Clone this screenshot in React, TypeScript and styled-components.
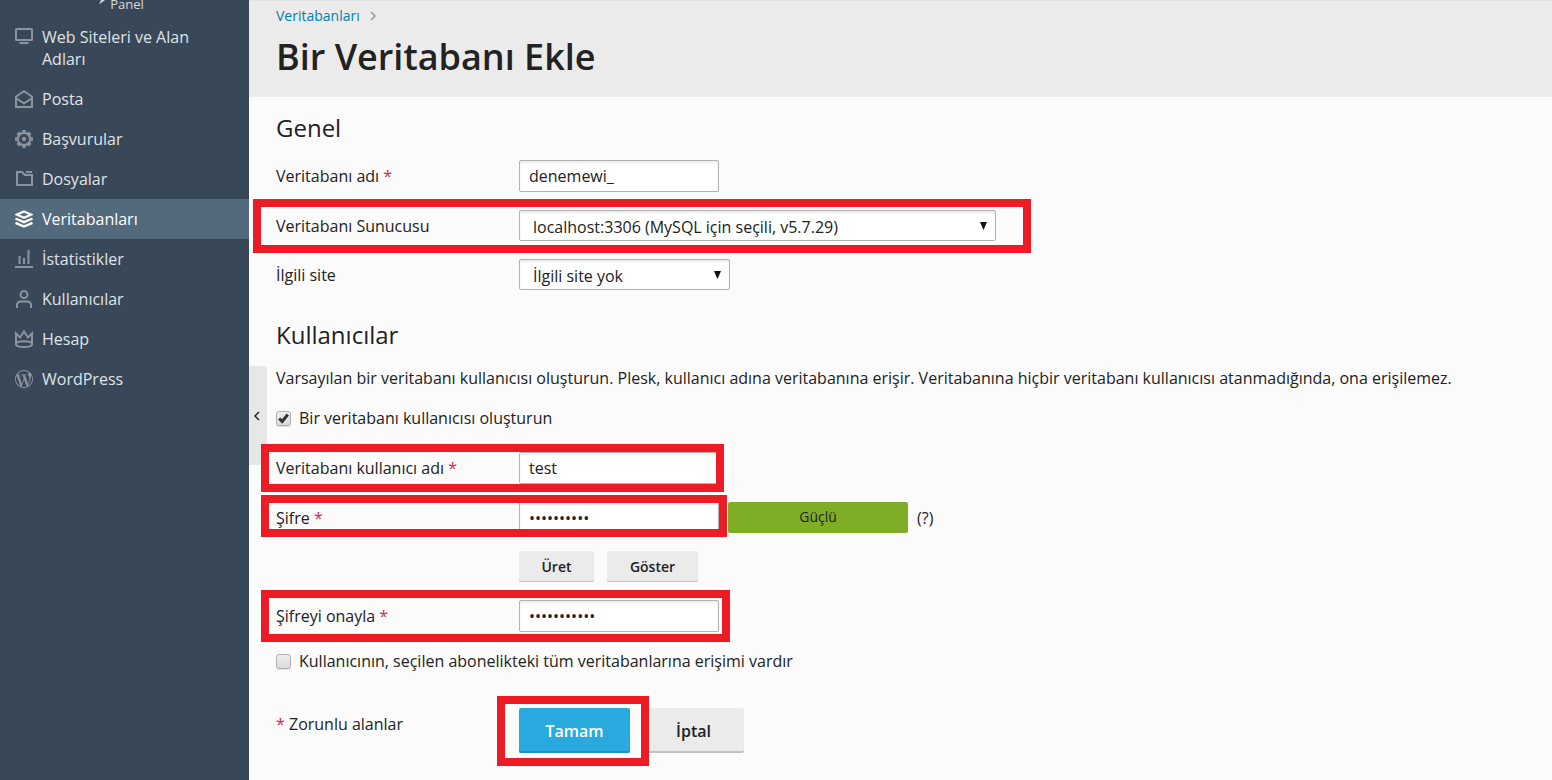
import React from "react";
import styled, { createGlobalStyle } from "styled-components";
import { SiWordpress } from "react-icons/si";

const GlobalStyle = createGlobalStyle`
  *, *::before, *::after { box-sizing: border-box; }
  body {
    margin: 0;
    background: #fbfbfb;
    color: #222;
    font: 16px/22px "Open Sans", "Noto Sans", sans-serif;
  }
  h1, h2, p { margin: 0; }
  button, input, select { font: inherit; color: inherit; margin: 0; }
`;

const Layout = styled.div`
  display: flex;
  min-height: 100vh;
`;

const Sidebar = styled.aside`
  flex: 0 0 249px;
  background: #394858;
  color: #dfe3e7;
`;

const Brand = styled.div`
  display: flex;
  align-items: flex-start;
  justify-content: center;
  gap: 5px;
  height: 17px;
  padding-right: 6px;
  color: #d5dade;
  font-size: 13px;
  line-height: 8px;

  svg { flex: none; }
`;

const NavList = styled.ul`
  list-style: none;
  margin: 0;
  padding: 0;
`;

const NavLink = styled.a<{ $active?: boolean }>`
  display: flex;
  gap: 9px;
  padding: 9px 40px 9px 15px;
  color: ${(p) => (p.$active ? "#fff" : "inherit")};
  background: ${(p) => (p.$active ? "#53697c" : "transparent")};
  text-decoration: none;

  svg {
    flex: none;
    margin-top: 2px;
    color: ${(p) => (p.$active ? "#fff" : "#8b949e")};
  }
`;

const Main = styled.main`
  position: relative;
  flex: 1;
  min-width: 0;
`;

const Header = styled.header`
  height: 97px;
  padding: 5px 27px 0;
  border-top: 1px solid #e2e2e2;
  background: #ebebeb;
`;

const Breadcrumb = styled.nav`
  display: flex;
  align-items: center;
  gap: 10px;
  font-size: 14px;
  line-height: 20px;

  a { color: #007fae; text-decoration: none; }
`;

const Title = styled.h1`
  margin-top: 7px;
  font-size: 36px;
  font-weight: 600;
  line-height: 48px;
`;

const CollapseButton = styled.button`
  position: absolute;
  top: 366px;
  left: 0;
  display: flex;
  align-items: center;
  width: 18px;
  height: 99px;
  padding: 0 0 0 4px;
  border: 0;
  border-radius: 0 4px 4px 0;
  background: #e7e7e7;
`;

const Form = styled.form`
  padding: 16px 27px 14px;
`;

const Section = styled.section`
  margin-bottom: 30px;
`;

const SectionTitle = styled.h2`
  margin-bottom: 17px;
  font-size: 24px;
  font-weight: 400;
  line-height: 30px;
`;

const Intro = styled.p`
  margin-bottom: 18px;
`;

const Row = styled.div`
  position: relative;
  display: grid;
  grid-template-columns: 243px 1fr;
  align-items: center;
  margin-bottom: 18px;
`;

const Controls = styled.div`
  grid-column: 2;
  display: flex;
  align-items: center;
`;

const Star = styled.span`
  color: #d0294e;
`;

const TextInput = styled.input<{ $height?: number }>`
  width: 200px;
  height: ${(p) => p.$height ?? 32}px;
  padding: 0 9px;
  border: 1px solid #b2b2b2;
  border-radius: 2px;
  background: #fff;
  box-shadow: inset 0 2px 2px #ececec;
  outline: 0;
`;

const SelectBox = styled.div<{ $width: number }>`
  display: grid;
  align-items: center;
  width: ${(p) => p.$width}px;

  select, svg { grid-area: 1 / 1; }
  svg { justify-self: end; margin-right: 9px; pointer-events: none; }
`;

const Select = styled.select`
  width: 100%;
  height: 31px;
  padding: 3px 24px 0 13px;
  border: 1px solid #b2b2b2;
  border-radius: 2px;
  background: #fff;
  box-shadow: inset 0 2px 2px #ececec;
  appearance: none;
  outline: 0;
`;

const Strength = styled.div`
  width: 180px;
  height: 31px;
  margin: 0 9px;
  border-radius: 2px;
  background: #80ad26;
  font-size: 14px;
  line-height: 30px;
  text-align: center;
`;

const Button = styled.button<{ $large?: boolean; $primary?: boolean; $width: number }>`
  width: ${(p) => p.$width}px;
  height: ${(p) => (p.$large ? 45 : 31)}px;
  margin-right: 13px;
  padding: 0;
  border: 0;
  border-radius: 2px;
  background: ${(p) => (p.$primary ? "#28aade" : "#ebebeb")};
  box-shadow: inset 0 ${(p) => (p.$large ? "-2px" : "-1px")} 0 ${(p) => (p.$primary ? "#2390bd" : "#c2c2c2")};
  color: ${(p) => (p.$primary ? "#fff" : "#222")};
  font-size: ${(p) => (p.$large ? 16 : 14)}px;
  font-weight: 600;
`;

const CheckLabel = styled.label`
  display: flex;
  align-items: center;
  gap: 8px;
  margin-bottom: 23px;
`;

const CheckBox = styled.span`
  display: grid;
  place-items: center;

  input, svg { grid-area: 1 / 1; }
  svg { pointer-events: none; visibility: hidden; }
  input:checked + svg { visibility: visible; }
`;

const CheckInput = styled.input`
  width: 15px;
  height: 15px;
  border: 1px solid #b0b0b0;
  border-radius: 3px;
  background: linear-gradient(#eee, #dadada);
  box-shadow: 0 1px 1px #ddd;
  appearance: none;
`;

const Footer = styled(Row)`
  align-items: start;
  margin: 36px 0 0;

  p { margin-top: 5px; }
`;

const Highlight = styled.span<{ $left: number; $width: number; $top: number; $height: number }>`
  position: absolute;
  left: ${(p) => p.$left}px;
  top: ${(p) => p.$top}px;
  width: ${(p) => p.$width}px;
  height: ${(p) => p.$height}px;
  border: 8px solid #ed1c24;
  pointer-events: none;
`;

const Icon = ({ children }: { children: React.ReactNode }) => (
  <svg width="18" height="18" viewBox="0 0 18 18" fill="none" stroke="currentColor" strokeWidth="2" aria-hidden="true">
    {children}
  </svg>
);

const ScreenIcon = () => (
  <Icon>
    <rect x="1" y="1" width="16" height="11" rx=".5" />
    <path d="M4.5 15h9" />
  </Icon>
);
const MailIcon = () => (
  <Icon>
    <path d="M1 6.5 9 1.2l8 5.3V17H1z" />
    <path d="m1.5 8.5 7.5 4.800 7.500-4.800" />
  </Icon>
);
const GearIcon = () => (
  <Icon>
    <circle cx="9" cy="9" r="6.200" strokeWidth="2.200" />
    <circle cx="9" cy="9" r="2.200" fill="currentColor" stroke="none" />
    <path strokeWidth="3.600" d="M9 0v2.500M9 15.500V18M0 9h2.500M15.500 9H18M2.800 2.800l1.800 1.800M13.400 13.400l1.800 1.800M2.800 15.200l1.800-1.800M13.400 4.600l1.800-1.800" />
  </Icon>
);
const FolderIcon = () => (
  <Icon>
    <path d="M2 2h5l3 3h7v10H2z" />
    <path d="M11 2h6" />
  </Icon>
);
const LayersIcon = () => (
  <Icon>
    <path strokeWidth="2.200" d="M1.800 4.600 9 1.400l7.200 3.200L9 7.800z" />
    <path strokeWidth="2.400" d="m.5 8.500 8.500 3.700 8.500-3.700M.5 12.800l8.500 3.700 8.500-3.700" />
  </Icon>
);
const StatsIcon = () => (
  <Icon>
    <path d="M0 17h18" />
    <path d="M4.500 14V6M9 14V8M13.500 14V0" />
  </Icon>
);
const UserIcon = () => (
  <Icon>
    <circle cx="9" cy="4.500" r="3.500" />
    <path d="M2 18v-3a3.500 3.500 0 0 1 3.500-3.500h7A3.500 3.500 0 0 1 16 15v3" />
  </Icon>
);
const CrownIcon = () => (
  <Icon>
    <path d="M1 14.500V3.500L5 7.500 9 1.500l4 6 4-4v11" />
    <path d="M1 14.200c0-1.900 3.500-3 8-3s8 1.100 8 3S13.500 17 9 17s-8-.9-8-2.800z" />
  </Icon>
);

const navItems = [
  { label: "Web Siteleri ve Alan Adları", icon: <ScreenIcon /> },
  { label: "Posta", icon: <MailIcon /> },
  { label: "Başvurular", icon: <GearIcon /> },
  { label: "Dosyalar", icon: <FolderIcon /> },
  { label: "Veritabanları", icon: <LayersIcon />, active: true },
  { label: "İstatistikler", icon: <StatsIcon /> },
  { label: "Kullanıcılar", icon: <UserIcon /> },
  { label: "Hesap", icon: <CrownIcon /> },
  { label: "WordPress", icon: <SiWordpress size={18} aria-hidden="true" /> },
];

const Arrow = () => (
  <svg width="7" height="8" viewBox="0 0 8 8" preserveAspectRatio="none" aria-hidden="true">
    <path d="M0 0h8L4 8z" fill="#111" />
  </svg>
);

const CheckMark = () => (
  <svg width="11" height="11" viewBox="0 0 11 11" fill="none" stroke="#333" strokeWidth="3" aria-hidden="true">
    <path d="m1.200 5.500 3 3L9.800 1.500" />
  </svg>
);

export default function App() {
  return (
    <>
      <GlobalStyle />
      <Layout>
        <Sidebar>
          <Brand>
            <svg width="6" height="6" viewBox="0 0 6 6" aria-hidden="true">
              <path d="M2 0h4L0 4.500z" fill="currentColor" />
            </svg>
            <span>Panel</span>
          </Brand>
          <nav>
            <NavList>
              {navItems.map((item) => (
                <li key={item.label}>
                  <NavLink href="#" $active={item.active}>
                    {item.icon}
                    <span>{item.label}</span>
                  </NavLink>
                </li>
              ))}
            </NavList>
          </nav>
        </Sidebar>
        <Main>
          <Header>
            <Breadcrumb>
              <a href="#">Veritabanları</a>
              <svg width="6" height="10" viewBox="0 0 6 10" fill="none" stroke="#999" strokeWidth="1.500" aria-hidden="true">
                <path d="m1 1 4 4-4 4" />
              </svg>
            </Breadcrumb>
            <Title>Bir Veritabanı Ekle</Title>
          </Header>
          <CollapseButton type="button" aria-label="Menüyü daralt">
            <svg width="7" height="10" viewBox="0 0 7 10" fill="none" stroke="#222" strokeWidth="1.500" aria-hidden="true">
              <path d="M6 1 2 5l4 4" />
            </svg>
          </CollapseButton>
          <Form onSubmit={(e) => e.preventDefault()}>
            <Section>
              <SectionTitle>Genel</SectionTitle>
              <Row>
                <label htmlFor="name">Veritabanı adı <Star>*</Star></label>
                <TextInput id="name" defaultValue="denemewi_" />
              </Row>
              <Row>
                <label htmlFor="server">Veritabanı Sunucusu</label>
                <SelectBox $width={477}>
                  <Select id="server">
                    <option>localhost:3306 (MySQL için seçili, v5.7.29)</option>
                  </Select>
                  <Arrow />
                </SelectBox>
                <Highlight $left={-23} $top={-11} $width={778} $height={54} />
              </Row>
              <Row>
                <label htmlFor="site">İlgili site</label>
                <SelectBox $width={211}>
                  <Select id="site">
                    <option>İlgili site yok</option>
                  </Select>
                  <Arrow />
                </SelectBox>
              </Row>
            </Section>
            <SectionTitle>Kullanıcılar</SectionTitle>
            <Intro>
              Varsayılan bir veritabanı kullanıcısı oluşturun. Plesk, kullanıcı adına veritabanına erişir. Veritabanına hiçbir veritabanı kullanıcısı atanmadığında, ona erişilemez.
            </Intro>
            <CheckLabel>
              <CheckBox>
                <CheckInput type="checkbox" defaultChecked />
                <CheckMark />
              </CheckBox>
              Bir veritabanı kullanıcısı oluşturun
            </CheckLabel>
            <Row>
              <label htmlFor="user">Veritabanı kullanıcı adı <Star>*</Star></label>
              <TextInput id="user" defaultValue="test" />
              <Highlight $left={-15} $top={-8} $width={463} $height={48} />
            </Row>
            <Row>
              <label htmlFor="password">Şifre <Star>*</Star></label>
              <Controls>
                <TextInput id="password" type="password" defaultValue="abcdefghij" $height={31} />
                <Strength>Güçlü</Strength>
                <span>(?)</span>
              </Controls>
              <Highlight $left={-15} $top={-7} $width={466} $height={42} />
            </Row>
            <Row>
              <Controls>
                <Button type="button" $width={75}>Üret</Button>
                <Button type="button" $width={91}>Göster</Button>
              </Controls>
            </Row>
            <Row>
              <label htmlFor="confirm">Şifreyi onayla <Star>*</Star></label>
              <TextInput id="confirm" type="password" defaultValue="abcdefghijk" />
              <Highlight $left={-15} $top={-10} $width={469} $height={52} />
            </Row>
            <CheckLabel>
              <CheckBox>
                <CheckInput type="checkbox" />
                <CheckMark />
              </CheckBox>
              Kullanıcının, seçilen abonelikteki tüm veritabanlarına erişimi vardır
            </CheckLabel>
            <Footer>
              <p><Star>*</Star> Zorunlu alanlar</p>
              <Controls>
                <Button type="submit" $large $primary $width={111}>Tamam</Button>
                <Button type="button" $large $width={101}>İptal</Button>
              </Controls>
              <Highlight $left={221} $top={-12} $width={152} $height={70} />
            </Footer>
          </Form>
        </Main>
      </Layout>
    </>
  );
}
